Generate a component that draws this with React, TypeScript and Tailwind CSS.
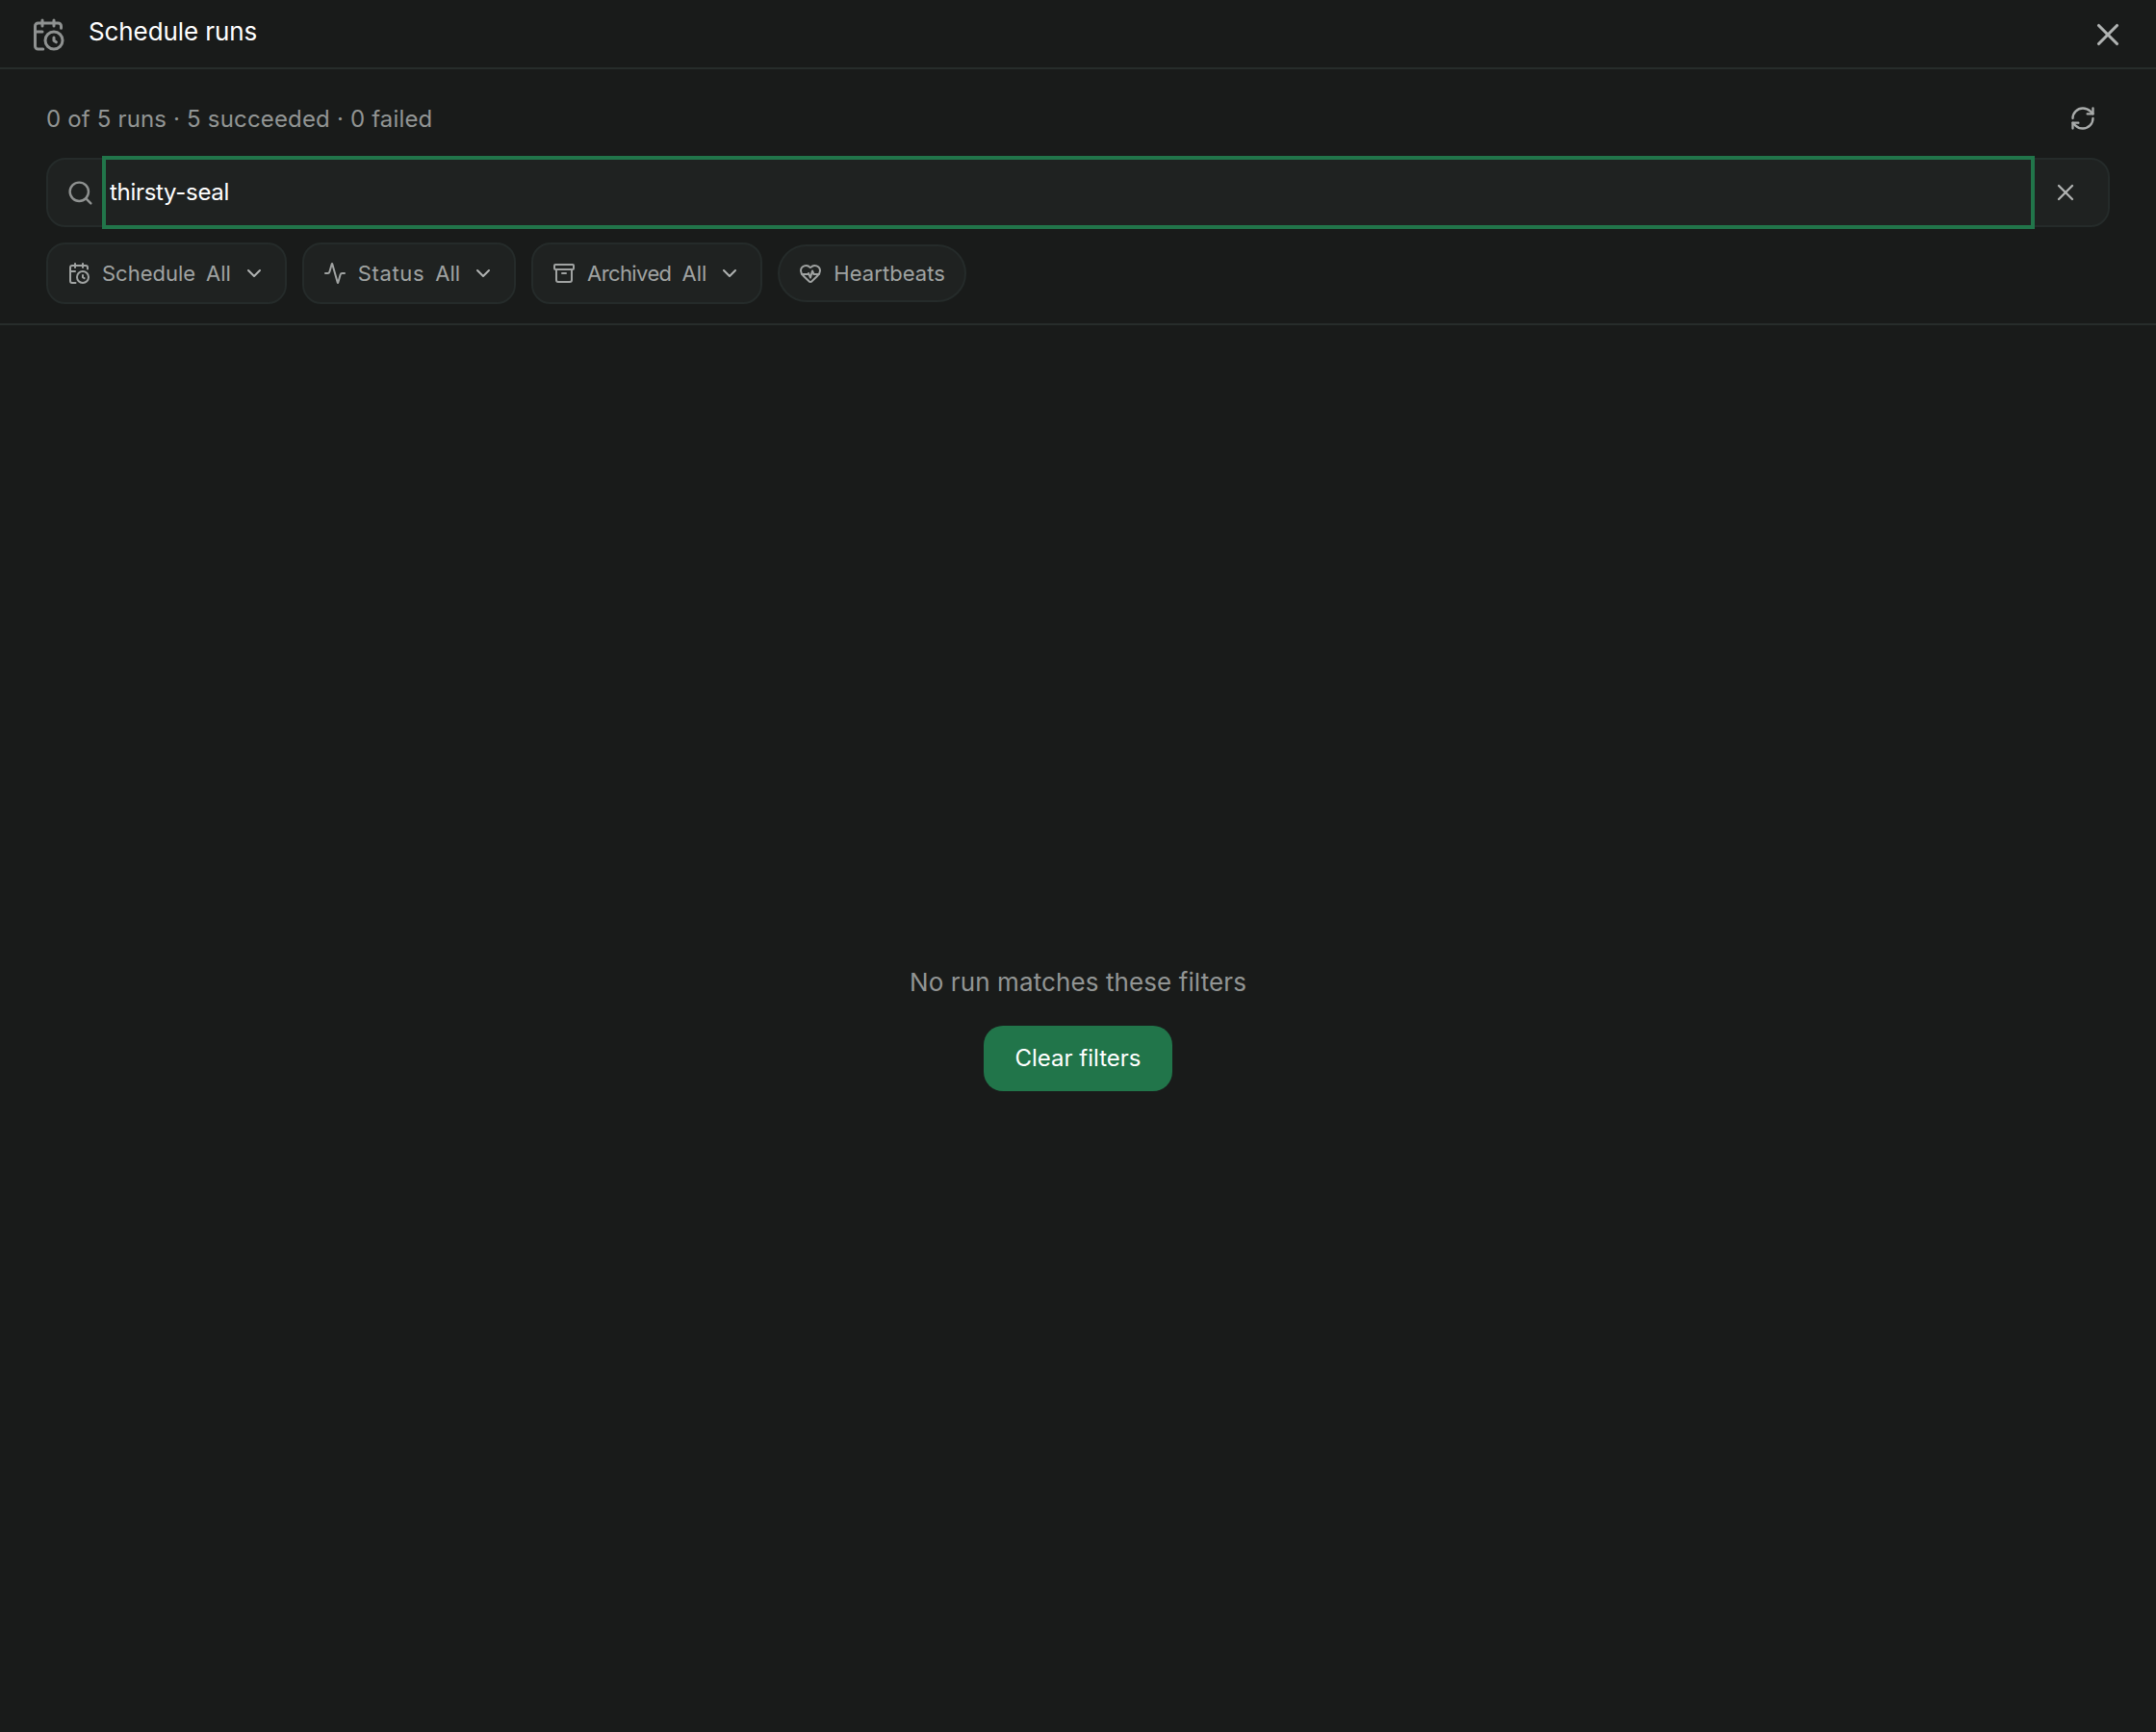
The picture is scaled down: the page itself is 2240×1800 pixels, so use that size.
import { Activity, Archive, CalendarClock, ChevronDown, HeartPulse, RefreshCw, Search, X } from "lucide-react";
import type { ReactNode } from "react";

function FilterButton({ icon, label, labelClass }: { icon: ReactNode; label: string; labelClass: string }) {
  return (
    <button className="h-[64px] px-[20px] flex items-center rounded-[20px] border-2 border-[#252b2a] bg-[#1f2221] text-[22px] text-[#a0a3a2]">
      {icon}
      <span className={`ml-[12px] ${labelClass}`}>{label}</span>
      <span className="ml-[11px]">All</span>
      <ChevronDown size={24} strokeWidth={2} className="ml-[12px] text-[#b0b3b2]" />
    </button>
  );
}

export default function App() {
  return (
    <div className="w-[2240px] h-[1800px] flex flex-col bg-[#191b1a] font-['Inter',sans-serif]">
      <header className="h-[72px] pl-[32px] pr-[31px] flex items-center justify-between border-b-2 border-[#272d2b]">
        <div className="flex items-center gap-[24px]">
          <CalendarClock size={36} strokeWidth={2} className="text-[#8f9291] mt-[2px]" />
          <h1 className="text-[26px] leading-[32px] tracking-[-0.1px] -mt-[4px] text-white">Schedule runs</h1>
        </div>
        <X size={38} strokeWidth={2} className="text-[#b0b3b2] mt-[2px]" />
      </header>

      <section className="px-[48px] pt-[33px] pb-[20px] border-b-2 border-[#272d2b]">
        <div className="h-[36px] pr-[14px] flex items-center justify-between">
          <span className="pt-[2px] text-[24px] tracking-[0.17px] text-[#929594]">0 of 5 runs · 5 succeeded · 0 failed</span>
          <RefreshCw size={28} strokeWidth={2} className="text-[#a9acab]" />
        </div>

        <div className="mt-[23px] h-[72px] flex items-center rounded-[20px] border-2 border-[#252b2a] bg-[#1f2221]">
          <div className="w-[56px] shrink-0 flex justify-end pr-[8px]">
            <Search size={29} strokeWidth={2} className="text-[#8f9291]" />
          </div>
          <input
            readOnly
            value="thirsty-seal"
            className="flex-1 h-[76px] pl-[4px] pb-[2px] bg-transparent border-4 border-[#21754a] text-[24px] tracking-[-0.3px] text-white outline-none"
          />
          <div className="w-[76px] shrink-0 flex justify-center pr-[12px]">
            <X size={28} strokeWidth={2} className="text-[#b0b3b2]" />
          </div>
        </div>

        <div className="mt-[16px] flex items-center gap-[16px]">
          <FilterButton icon={<CalendarClock size={24} strokeWidth={2} />} label="Schedule" labelClass="tracking-[-0.02px]" />
          <FilterButton icon={<Activity size={24} strokeWidth={2} />} label="Status" labelClass="tracking-[0.63px]" />
          <FilterButton icon={<Archive size={24} strokeWidth={2} />} label="Archived" labelClass="tracking-[-0.6px]" />
          <button className="h-[60px] px-[20px] flex items-center rounded-full border-2 border-[#252b2a] bg-[#1f2221] text-[22px] tracking-[0.05px] text-[#a0a3a2]">
            <HeartPulse size={24} strokeWidth={2} />
            <span className="ml-[12px]">Heartbeats</span>
          </button>
        </div>
      </section>

      <main className="flex-1 flex flex-col items-center pt-[663px]">
        <p className="text-[26px] leading-[40px] tracking-[0.1px] text-[#929594]">No run matches these filters</p>
        <button className="mt-[25px] w-[196px] h-[68px] rounded-[20px] bg-[#21754a] text-[24px] text-white">Clear filters</button>
      </main>
    </div>
  );
}
